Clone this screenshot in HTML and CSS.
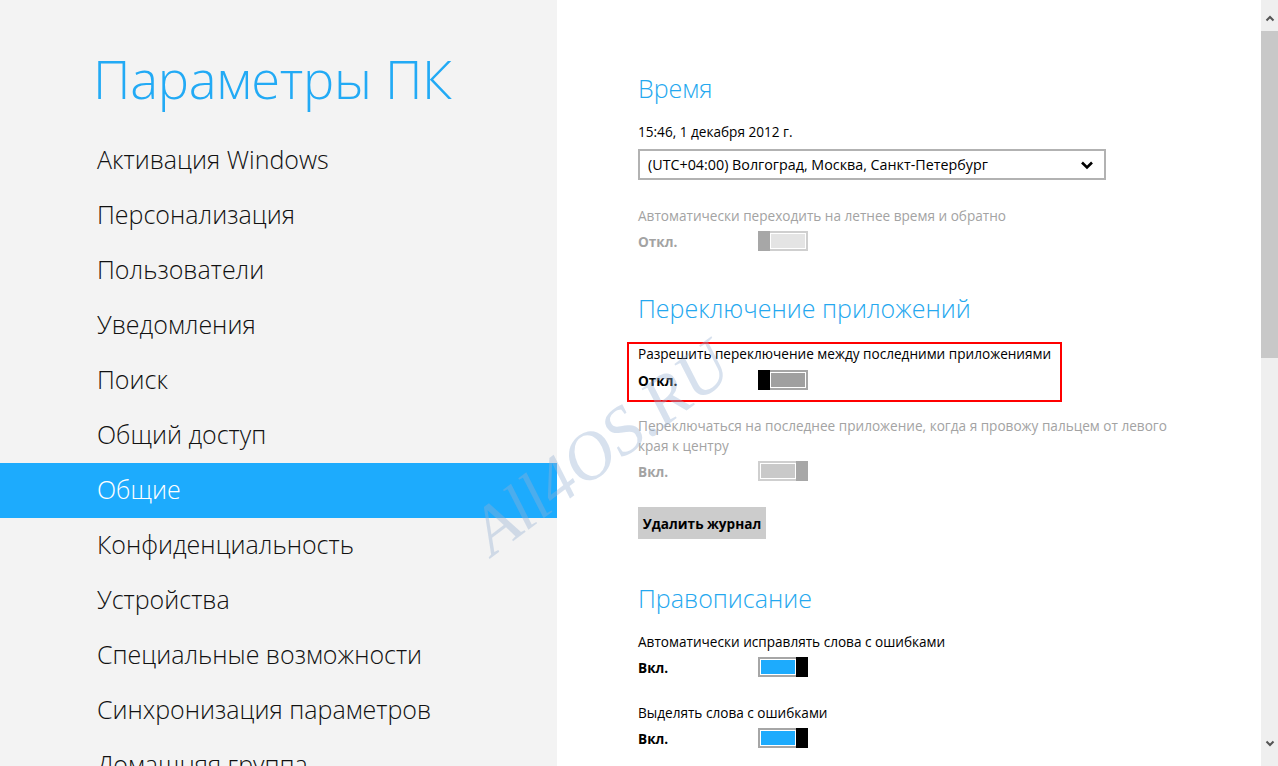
FILE: index.html
```html
<!DOCTYPE html>
<html lang="ru">
<head>
<meta charset="utf-8">
<title>Параметры ПК</title>
<link rel="stylesheet" href="styles.css">
</head>
<body>
<div class="screen">
  <aside class="sidebar">
    <h1 class="app-title">Параметры ПК</h1>
    <nav class="nav">
      <div class="nav-item">Активация Windows</div>
      <div class="nav-item">Персонализация</div>
      <div class="nav-item">Пользователи</div>
      <div class="nav-item">Уведомления</div>
      <div class="nav-item">Поиск</div>
      <div class="nav-item">Общий доступ</div>
      <div class="nav-item selected">Общие</div>
      <div class="nav-item">Конфиденциальность</div>
      <div class="nav-item">Устройства</div>
      <div class="nav-item">Специальные возможности</div>
      <div class="nav-item">Синхронизация параметров</div>
      <div class="nav-item">Домашняя группа</div>
    </nav>
  </aside>

  <main class="content">
    <h2 class="section-title">Время</h2>
    <div class="text">15:46, 1 декабря 2012 г.</div>
    <div class="select">
      <span>(UTC+04:00) Волгоград, Москва, Санкт-Петербург</span>
      <svg class="chev" width="14" height="10" viewBox="0 0 14 10"><polyline points="2,2.5 7,7.5 12,2.5" fill="none" stroke="#000" stroke-width="2.6"/></svg>
    </div>
    <div class="text disabled gap-26">Автоматически переходить на летнее время и обратно</div>
    <div class="toggle-row">
      <span class="state disabled">Откл.</span>
      <span class="toggle off dis"><span class="thumb"></span><span class="track"></span></span>
    </div>

    <h2 class="section-title gap-39">Переключение приложений</h2>
    <div class="highlight">
      <div class="text">Разрешить переключение между последними приложениями</div>
      <div class="toggle-row">
        <span class="state">Откл.</span>
        <span class="toggle off"><span class="thumb"></span><span class="track"></span></span>
      </div>
    </div>
    <div class="text disabled gap-14">Переключаться на последнее приложение, когда я провожу пальцем от левого<br>края к центру</div>
    <div class="toggle-row">
      <span class="state disabled">Вкл.</span>
      <span class="toggle on dis"><span class="track"></span><span class="thumb"></span></span>
    </div>
    <button class="btn">Удалить журнал</button>

    <h2 class="section-title gap-41">Правописание</h2>
    <div class="text">Автоматически исправлять слова с ошибками</div>
    <div class="toggle-row">
      <span class="state">Вкл.</span>
      <span class="toggle on"><span class="track"></span><span class="thumb"></span></span>
    </div>
    <div class="text gap-26">Выделять слова с ошибками</div>
    <div class="toggle-row">
      <span class="state">Вкл.</span>
      <span class="toggle on"><span class="track"></span><span class="thumb"></span></span>
    </div>
  </main>

  <div class="scrollbar">
    <div class="sb-btn">
      <svg width="10" height="7" viewBox="0 0 10 7"><polyline points="1.5,5.5 5,2 8.5,5.5" fill="none" stroke="#555" stroke-width="2"/></svg>
    </div>
    <div class="sb-thumb"></div>
    <div class="sb-track"></div>
    <div class="sb-btn bottom">
      <svg width="10" height="7" viewBox="0 0 10 7"><polyline points="1.5,1.5 5,5 8.5,1.5" fill="none" stroke="#555" stroke-width="2"/></svg>
    </div>
  </div>

  <div class="watermark">All4OS.RU</div>
</div>
</body>
</html>
```

FILE: styles.css
```css
* { box-sizing: border-box; }
html, body { margin: 0; padding: 0; }
body {
  width: 1278px;
  height: 766px;
  overflow: hidden;
  background: #fff;
  font-family: "Open Sans", "Noto Sans", "Liberation Sans", sans-serif;
  color: #000;
}
.screen {
  position: relative;
  display: flex;
  width: 1278px;
  height: 766px;
  overflow: hidden;
}

/* Sidebar */
.sidebar {
  width: 557px;
  flex: none;
  background: #f3f3f3;
  height: 766px;
}
.app-title {
  margin: 0;
  padding: 44px 0 0 93px;
  height: 133px;
  font-size: 52.5px;
  line-height: 70px;
  font-weight: 300;
  color: #22aaf5;
  letter-spacing: -0.3px;
}
.nav { display: flex; flex-direction: column; }
.nav-item {
  height: 55px;
  line-height: 53px;
  padding-left: 97px;
  font-size: 25px;
  font-weight: 300;
  color: #111;
  white-space: nowrap;
}
.nav-item.selected {
  background: #1dabfd;
  color: #fff;
}

/* Content */
.content {
  flex: 1;
  padding: 70px 0 0 81px;
  position: relative;
}
.section-title {
  margin: 0 0 16px;
  font-size: 25px;
  line-height: 36px;
  font-weight: 300;
  color: #25a8ef;
  white-space: nowrap;
}
.gap-39 { margin-top: 39px; }
.gap-41 { margin-top: 41px; }
.gap-26 { margin-top: 26px; }
.gap-14 { margin-top: 14px; }
.text {
  font-size: 13.6px;
  line-height: 20px;
  white-space: nowrap;
}
.disabled { color: #a3a3a3; }

.select {
  margin-top: 7px;
  width: 468px;
  height: 31px;
  border: 2px solid #b2b2b2;
  display: flex;
  align-items: center;
  justify-content: space-between;
  padding: 0 10px 0 8px;
  font-size: 14.3px;
}
.chev { display: block; }

.toggle-row {
  display: flex;
  align-items: center;
  height: 20px;
  margin-top: 5px;
}
.state {
  width: 120px;
  font-size: 13.6px;
  font-weight: 700;
}
.toggle {
  display: flex;
  width: 50px;
  height: 20px;
}
.toggle .thumb {
  width: 12px;
  height: 20px;
  background: #000;
  flex: none;
}
.toggle .track {
  flex: 1;
  height: 20px;
  border: 2px solid #a6a6a6;
  box-shadow: inset 0 0 0 1px #fff;
  background: #a0a0a0;
}
.toggle.on .track { background: #1dabfd; }
.toggle.off .track { border-left: none; }
.toggle.on .track { border-right: none; }
.toggle.dis .thumb { background: #a7a7a7; }
.toggle.dis .track { border-color: #cfcfcf; }
.toggle.off.dis .track { background: #e4e4e4; }
.toggle.on.dis .track { background: #c9c9c9; }

.highlight {
  margin: 12px 0 0 -11px;
  width: 435px;
  border: 2px solid #ff0000;
  padding: 0 0 10px 9px;
}
.highlight .toggle-row { margin-top: 6px; }

.btn {
  display: block;
  margin-top: 26px;
  width: 128px;
  height: 32px;
  border: none;
  background: #cccccc;
  font-family: inherit;
  font-size: 13.6px;
  font-weight: 700;
  color: #000;
  padding: 0;
}

/* Scrollbar */
.scrollbar {
  width: 17px;
  flex: none;
  display: flex;
  flex-direction: column;
  background: #efefef;
  height: 766px;
}
.sb-btn {
  height: 31px;
  display: flex;
  align-items: center;
  justify-content: center;
  padding-top: 6px;
}
.sb-btn.bottom { height: 35px; padding-top: 0; padding-bottom: 10px; }
.sb-thumb { height: 327px; background: #c8c8c8; }
.sb-track { flex: 1; }

/* Watermark */
.watermark {
  position: absolute;
  left: 440px;
  top: 412px;
  width: 320px;
  text-align: center;
  font-family: "Liberation Serif", serif;
  font-style: italic;
  font-size: 68px;
  line-height: 70px;
  color: rgba(150, 175, 210, 0.38);
  transform: rotate(-37deg);
  pointer-events: none;
  white-space: nowrap;
}
```
